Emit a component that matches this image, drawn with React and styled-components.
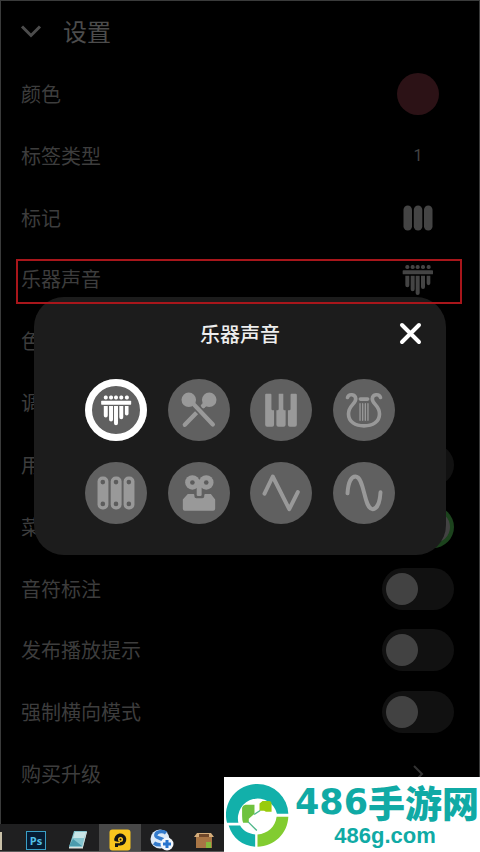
import React, { useState } from "react";
import styled, { createGlobalStyle } from "styled-components";

const GlobalStyle = createGlobalStyle`
  * { box-sizing: border-box; }
  body {
    margin: 0;
    background: #000;
    font-family: "Noto Sans CJK SC", "Noto Sans", sans-serif;
  }
  button, input { font: inherit; margin: 0; padding: 0; border: 0; }
  button { background: none; color: inherit; cursor: pointer; }
  svg { display: block; }
`;

const Page = styled.div`
  position: relative;
  display: flex;
  flex-direction: column;
  min-height: 100vh;
  background: #000;
`;

const Screen = styled.main`
  flex: 1;
  display: flex;
  flex-direction: column;
  border: 1px solid #3a3b3b;
  border-bottom: 0;
`;

const Header = styled.header`
  display: flex;
  align-items: center;
  gap: 20px;
  height: 60px;
  padding: 0 18px;
  color: #4c4c4c;
`;

const IconButton = styled.button`
  display: grid;
  place-items: center;
`;

const PageTitle = styled.h1`
  margin: 0;
  font-size: 24px;
  line-height: 36px;
  font-weight: 400;
`;

const SettingsList = styled.ul`
  flex: 1;
  display: grid;
  grid-template-rows: repeat(12, minmax(56px, 1fr));
  margin: 0;
  padding: 2px 0 19px;
  list-style: none;
`;

const SettingRow = styled.li`
  position: relative;
  display: flex;
  align-items: center;
  justify-content: space-between;
  padding: 0 25px 0 20px;
  color: #3d3d3d;
`;

const SettingLabel = styled.label`
  font-size: 20px;
  line-height: 28px;
`;

const SettingControl = styled.div`
  display: grid;
  place-items: center;
  width: 72px;
`;

const ValueButton = styled(IconButton)`
  color: #444;
  font-family: Roboto, sans-serif;
  font-size: 16px;
  line-height: 20px;
`;

const Swatch = styled.button`
  width: 42px;
  height: 42px;
  border-radius: 50%;
  background: #2c1216;
`;

const Toggle = styled.input`
  appearance: none;
  display: flex;
  align-items: center;
  width: 72px;
  height: 42px;
  padding: 0 4px;
  border-radius: 21px;
  background: #111;
  cursor: pointer;

  &::before {
    content: "";
    width: 32px;
    height: 32px;
    border-radius: 50%;
    background: #424242;
  }

  &:checked {
    justify-content: flex-end;
    background: #1c431d;
  }
`;

const HighlightFrame = styled.span`
  position: absolute;
  z-index: 3;
  inset: 11px 17px 6px 15px;
  border: 2px solid #a8161b;
  pointer-events: none;
`;

const Dialog = styled.section`
  position: absolute;
  z-index: 2;
  top: 297px;
  left: 34px;
  right: 34px;
  padding: 17px 22px 31px;
  border-radius: 30px;
  background: #1c1c1c;
`;

const DialogHeader = styled.header`
  display: grid;
  grid-template-columns: 28px 1fr 28px;
  align-items: center;
  height: 40px;
  color: #fff;
`;

const DialogTitle = styled.h2`
  grid-column: 2;
  margin: 0;
  text-align: center;
  font-size: 20px;
  line-height: 28px;
  font-weight: 500;
  color: #eee;
`;

const SoundGrid = styled.div`
  display: grid;
  grid-template-columns: repeat(4, 62px);
  justify-content: space-between;
  row-gap: 21px;
  padding: 25px 29px 0;
`;

const SoundButton = styled.button`
  width: 62px;
  height: 62px;
  border-radius: 50%;
  background: #606060;
  color: ${(p) => (p.$active ? "#fff" : "#999")};
  box-shadow: ${(p) => (p.$active ? "inset 0 0 0 7px #fff" : "none")};
`;

const Taskbar = styled.nav`
  display: flex;
  height: 28px;
  background: #1f1f20;
  border-bottom: 1px solid #5a5a5a;
`;

const TaskSliver = styled.span`
  width: 2px;
  height: 18px;
  margin: 8px 13px 0 0;
  background: #c9c0a8;
`;

const TaskButton = styled.button`
  display: grid;
  place-items: center;
  width: 42px;
  padding-top: 5px;
  overflow: hidden;
  background: ${(p) => (p.$active ? "#484848" : "transparent")};
`;

const PsTile = styled.span`
  width: 20px;
  height: 19px;
  border: 1px solid #3a9fc6;
  background: #061c33;
  color: #52bfe8;
  font: bold 11px/17px "Open Sans", sans-serif;
`;

const SiteBadge = styled.a`
  position: absolute;
  z-index: 4;
  right: 0;
  bottom: 0;
  display: flex;
  align-items: center;
  gap: 6px;
  width: 256px;
  height: 75px;
  padding-left: 2px;
  background: #fff;
  color: #10aaa5;
  text-decoration: none;
`;

const SiteText = styled.span`
  display: flex;
  flex-direction: column;
  align-items: center;
`;

const SiteName = styled.span`
  display: flex;
  align-items: center;
  height: 42px;
  white-space: nowrap;
  font-size: 37px;
  line-height: 42px;
  font-weight: 900;
`;

const SiteDigits = styled.span`
  font-family: "DejaVu Sans", sans-serif;
  font-size: 35px;
  font-weight: 700;
`;

const SiteDomain = styled.span`
  padding-right: 4px;
  font: bold 22px/26px "Liberation Sans", sans-serif;
`;

const ChevronDown = () => (
  <svg width="24" height="24" viewBox="0 0 24 24" fill="none" stroke="currentColor" strokeWidth="3">
    <path d="M3 7.500l9 9 9-9" />
  </svg>
);

const ChevronRight = () => (
  <svg width="12" height="18" viewBox="0 0 12 18" fill="none" stroke="#333" strokeWidth="2">
    <path d="M2 1l8 8-8 8" />
  </svg>
);

const CloseIcon = () => (
  <svg width="28" height="28" viewBox="0 0 28 28" stroke="currentColor" strokeWidth="4" strokeLinecap="round">
    <path d="M6 5l17 17M23 5L6 22" />
  </svg>
);

const BarsIcon = () => (
  <svg width="30" height="26" viewBox="0 0 30 26" fill="currentColor">
    <rect x="0.500" y="0.500" width="8.500" height="25" rx="4.250" />
    <rect x="10.800" y="0.500" width="8.500" height="25" rx="4.250" />
    <rect x="21" y="0.500" width="8.500" height="25" rx="4.250" />
  </svg>
);

const KalimbaShape = () => (
  <g fill="currentColor">
    <rect x="93" y="108" width="91" height="12" rx="2" />
    {[101, 117, 132, 148, 165].map((x) => (
      <rect key={x} x={x} y="92" width="12" height="12" rx="5" />
    ))}
    <path d="M101 124h12v29a6 6 0 01-12 0zM117 124h12v41a6 6 0 01-12 0zM132 124h12v52a6 6 0 01-12 0zM148 124h12v34a6 6 0 01-12 0zM165 124h11v23a5.500 5.500 0 01-11 0z" />
  </g>
);

const KalimbaIcon = () => (
  <svg width="32" height="32" viewBox="91 86 96 96">
    <KalimbaShape />
  </svg>
);

const sounds = [
  { name: "卡林巴", box: "44 42 188 188", art: <KalimbaShape /> },
  {
    name: "马林巴",
    box: "292 42 188 188",
    art: (
      <g stroke="currentColor" strokeWidth="13" strokeLinecap="round">
        <path d="M416 106L343 181" />
        <path d="M358 106L437 186" stroke="#606060" strokeWidth="24" strokeLinecap="butt" />
        <circle cx="417" cy="105" r="22" fill="currentColor" stroke="none" />
        <path d="M402 121l-3 3" />
        <path d="M358 106L428 180" />
        <circle cx="355" cy="105" r="22" fill="currentColor" stroke="none" />
      </g>
    ),
  },
  {
    name: "钢琴",
    box: "30 42 188 188",
    art: (
      <g fill="currentColor">
        <path d="M76 90q0-3 3-3h13q3 0 3 3v43q0 4 4 4h4v44q0 6-6 6H82q-6 0-6-6z" />
        <path d="M117 87h14v46q0 4 4 4h3v44q0 6-6 6h-16q-6 0-6-6v-44h3q4 0 4-4z" />
        <path d="M172 90q0-3-3-3h-13q-3 0-3 3v43q0 4-4 4h-4v44q0 6 6 6h15q6 0 6-6z" />
      </g>
    ),
  },
  {
    name: "竖琴",
    box: "278 42 188 188",
    art: (
      <g fill="none" stroke="currentColor" strokeLinecap="round">
        <path strokeWidth="11" d="M322 98c4-12 24-11 25 4 0 16-22 20-22 46 0 24 21 36 47 36s47-12 47-36c0-26-22-30-22-46 1-15 21-16 25-4" />
        <path strokeWidth="11" d="M361 103h22" />
        <path strokeWidth="4" d="M360 117v50M368 117v50M376 117v50M384 117v50" />
      </g>
    ),
  },
  {
    name: "铁琴",
    box: "44 290 188 188",
    art: (
      <g>
        {[98, 138, 177].map((x) => (
          <g key={x}>
            <rect x={x - 16} y="334" width="33" height="100" rx="15" fill="currentColor" />
            <circle cx={x} cy="351" r="7" fill="#5c5c5c" />
            <circle cx={x} cy="417" r="7" fill="#5c5c5c" />
          </g>
        ))}
      </g>
    ),
  },
  {
    name: "八音盒",
    box: "292 290 188 188",
    art: (
      <g fill="currentColor">
        <circle cx="366" cy="352" r="22" />
        <circle cx="408" cy="352" r="22" />
        <rect x="366" y="344" width="42" height="16" />
        <rect x="379" y="359" width="15" height="34" rx="4" />
        <circle cx="366" cy="352" r="7" fill="#5c5c5c" />
        <circle cx="408" cy="352" r="7" fill="#5c5c5c" />
        <path d="M352 387h17q3 0 3 4v3q0 6 6 6h18q6 0 6-6v-3q0-4 3-4h17l13 17v28q0 6-6 6h-86q-6 0-6-6v-28z" />
      </g>
    ),
  },
  {
    name: "三角波",
    box: "30 290 188 188",
    art: <path d="M74 386l25-52 50 99 26-52" fill="none" stroke="currentColor" strokeWidth="12" strokeLinecap="round" strokeLinejoin="round" />,
  },
  {
    name: "正弦波",
    box: "278 290 188 188",
    art: <path d="M322 385c2-32 11-51 24-51 28 0 25 99 52 99 13 0 22-19 24-51" fill="none" stroke="currentColor" strokeWidth="12" strokeLinecap="round" />,
  },
];

const NotepadIcon = () => (
  <svg width="20" height="20" viewBox="0 0 20 20">
    <path d="M6 1h13l-4 16H1z" fill="#86c5cf" />
    <path d="M7 2h11l-2 6H5z" fill="#c8e5e6" />
    <path d="M5 9l9 7H1z" fill="#4b9bad" />
    <path d="M1 17h14v1.500H1zM19 2l-4 15-1 1 4-16z" fill="#dadfdc" />
  </svg>
);

const PlayerIcon = () => (
  <svg width="22" height="22" viewBox="0 0 22 22">
    <rect x="0.500" y="0.500" width="21" height="21" rx="3" fill="#fac51e" />
    <path d="M5.500 12a6 6 0 116 4.500H9V18H6v-4h5.500z" fill="#151515" />
    <circle cx="11.500" cy="10.500" r="2.500" fill="#fac51e" />
    <circle cx="11.500" cy="10.500" r="1" fill="#151515" />
    <path d="M5 13.500h6" stroke="#fac51e" strokeWidth="1.500" />
  </svg>
);

const GlobeIcon = () => (
  <svg width="24" height="22" viewBox="0 0 24 22">
    <circle cx="10" cy="10" r="9.500" fill="#dce9f7" />
    <path d="M16 4c-4-3-11-1-10 3 1 3 9 2 9 6 0 3-7 4-11 1" fill="none" stroke="#347bcc" strokeWidth="3.500" />
    <circle cx="17" cy="15" r="6.500" fill="#f2f6fb" />
    <path d="M17 11v8M13 15h8" stroke="#2874ce" strokeWidth="3" />
  </svg>
);

const BoxIcon = () => (
  <svg width="20" height="18" viewBox="0 0 20 18">
    <path d="M2 5h16v12H2z" fill="#a87545" />
    <path d="M3 2h14l3 4H0z" fill="#d4ad7b" />
    <path d="M5 3h10v3H5z" fill="#71482a" />
    <path d="M12 11h5v6h-5z" fill="#83b93d" />
  </svg>
);

const SiteLogo = () => (
  <svg width="63" height="64" viewBox="46 96 188 191">
    <path d="M49 215A92 92 0 01140 99A92 92 0 01232 188H198A58 58 0 0083 215z" fill="#12b0aa" />
    <path d="M54 223h34c8 14 23 24 45 27v36c-38-2-68-25-79-63z" fill="#12b0aa" />
    <path d="M140 286v-36c30-3 53-22 57-53h35c-2 50-42 89-92 89z" fill="#82cc30" />
    <path d="M94 170q2-8 10-9h27v27l-17 15v12H97q-3-8-3-20z" fill="#6fc23e" />
    <path d="M146 157l9-7h20q7 1 7 8v24h-17l-5-3h-14z" fill="#99cb0c" />
    <path d="M112 212l26 26M130 190l18-12" stroke="#4fb78a" strokeWidth="4" />
  </svg>
);

const toggle = (id, on) => <Toggle id={id} type="checkbox" defaultChecked={on} />;

const settings = [
  { id: "color", label: "颜色", control: <Swatch id="color" /> },
  { id: "tag", label: "标签类型", control: <ValueButton id="tag">1</ValueButton> },
  { id: "mark", label: "标记", control: <ValueButton id="mark"><BarsIcon /></ValueButton> },
  { id: "sound", label: "乐器声音", control: <ValueButton id="sound"><KalimbaIcon /></ValueButton>, framed: true },
  { id: "tone", label: "色" },
  { id: "tune", label: "调" },
  { id: "use", label: "用", control: toggle("use", false) },
  { id: "menu", label: "菜", control: toggle("menu", true) },
  { id: "note", label: "音符标注", control: toggle("note", false) },
  { id: "hint", label: "发布播放提示", control: toggle("hint", false) },
  { id: "landscape", label: "强制横向模式", control: toggle("landscape", false) },
  { id: "upgrade", label: "购买升级", control: <ValueButton id="upgrade"><ChevronRight /></ValueButton> },
];

export default function App() {
  const [selected, setSelected] = useState(0);
  return (
    <Page>
      <GlobalStyle />
      <Screen>
        <Header>
          <IconButton aria-label="返回"><ChevronDown /></IconButton>
          <PageTitle>设置</PageTitle>
        </Header>
        <SettingsList>
          {settings.map((s) => (
            <SettingRow key={s.id}>
              <SettingLabel htmlFor={s.control ? s.id : undefined}>{s.label}</SettingLabel>
              <SettingControl>{s.control}</SettingControl>
              {s.framed && <HighlightFrame />}
            </SettingRow>
          ))}
        </SettingsList>
      </Screen>
      <Dialog role="dialog" aria-labelledby="dialog-title">
        <DialogHeader>
          <DialogTitle id="dialog-title">乐器声音</DialogTitle>
          <IconButton aria-label="关闭"><CloseIcon /></IconButton>
        </DialogHeader>
        <SoundGrid>
          {sounds.map((s, i) => (
            <SoundButton
              key={s.name}
              aria-label={s.name}
              aria-pressed={selected === i}
              $active={selected === i}
              onClick={() => setSelected(i)}
            >
              <svg width="62" height="62" viewBox={s.box}>{s.art}</svg>
            </SoundButton>
          ))}
        </SoundGrid>
      </Dialog>
      <Taskbar>
        <TaskSliver />
        <TaskButton><PsTile>Ps</PsTile></TaskButton>
        <TaskButton aria-label="记事本"><NotepadIcon /></TaskButton>
        <TaskButton aria-label="播放器" $active><PlayerIcon /></TaskButton>
        <TaskButton aria-label="浏览器"><GlobeIcon /></TaskButton>
        <TaskButton aria-label="文件箱"><BoxIcon /></TaskButton>
      </Taskbar>
      <SiteBadge href="#">
        <SiteLogo />
        <SiteText>
          <SiteName><SiteDigits>486</SiteDigits>手游网</SiteName>
          <SiteDomain>486g.com</SiteDomain>
        </SiteText>
      </SiteBadge>
    </Page>
  );
}
